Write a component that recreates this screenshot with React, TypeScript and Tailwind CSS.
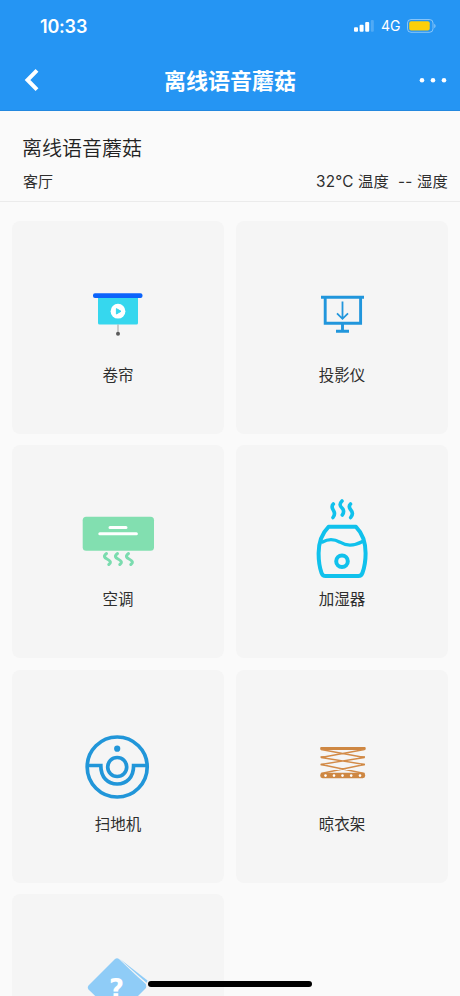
import React from 'react';

const RollerIcon = () => (
  <svg viewBox="0 0 96 96" className="w-24 h-24" fill="none">
    <rect x="28" y="30" width="40" height="28.5" rx="1.5" fill="#36d7ee" />
    <rect x="23" y="27.3" width="49.5" height="4.6" rx="2" fill="#0b63fb" />
    <circle cx="48" cy="45.2" r="7.4" fill="#fff" />
    <path d="M46.4 42.6v5.4l4.6-2.7z" fill="#36d7ee" stroke="#36d7ee" strokeLinejoin="round" />
    <path d="M48 58.5v8" stroke="#a3a3a3" strokeWidth="1" />
    <circle cx="48" cy="67.7" r="2" fill="#5a5a5a" />
  </svg>
);

const ProjectorIcon = () => (
  <svg viewBox="0 0 96 96" className="w-24 h-24" fill="none" stroke="#2196dc" strokeWidth="2.9">
    <path d="M27 31.3h43M31.2 31v26.3h35.4V31" />
    <path d="M48.5 58v7M42 65.3h13" />
    <path d="M48.5 35.5v17.3M43 47.3l5.5 5.500 5.500-5.500" strokeWidth="1.8" />
  </svg>
);

const AirConIcon = () => (
  <svg viewBox="0 0 96 96" className="w-24 h-24" fill="none" strokeLinecap="round">
    <rect x="12.7" y="26.8" width="71.3" height="34" rx="3.5" fill="#82dfb0" />
    <path d="M40 37.500h16M29.800 43.800h36.600" stroke="#fff" strokeWidth="3" />
    <g stroke="#7bdcaf" strokeWidth="3">
      <path d="M36.500 63.500c-3.500 2.500-2 4.300.5 5.500 3.500 1.700 4.500 3.500 1.800 5.500" />
      <path d="M47.500 63.500c-3.500 2.500-2 4.300.5 5.500 3.500 1.700 4.500 3.500 1.800 5.500" />
      <path d="M58.500 63.500c-3.500 2.500-2 4.300.5 5.500 3.500 1.700 4.500 3.500 1.800 5.500" />
    </g>
  </svg>
);

const HumidifierIcon = () => (
  <svg viewBox="0 0 96 96" className="w-24 h-24" fill="none" stroke="#10c1ec" strokeWidth="4" strokeLinecap="round" strokeLinejoin="round">
    <path d="M39.300 14c-2.500 2.500-1 4.500.2 6.500s1.500 4.500-.5 7M48 11c-3 3-2 5 0 7s2 4.500.3 7M56.500 14c-2.500 2.500-1 4.500.7 6.500s1.500 4.500-.5 7" strokeWidth="3.600" />
    <path d="M34.500 36.800h27.500c6 6 9.600 16 9.600 26.500 0 8-1.300 14.500-3.100 19.500-.7 2-1.800 3.200-4 3.200H31.500c-2.200 0-3.300-1.200-4-3.200-1.800-5-2.900-11.500-2.900-19.500 0-10.500 3.900-20.500 9.900-26.500z" />
    <path d="M28.500 52c6-3.500 12-3 17.500.2 7 4.300 14.500 3.600 22.500-.7" strokeWidth="3.300" />
    <circle cx="48" cy="71.200" r="5.800" />
  </svg>
);

const SweeperIcon = () => (
  <svg viewBox="0 0 96 96" className="w-24 h-24" fill="none" stroke="#2196d9" strokeWidth="3.700">
    <circle cx="47.200" cy="52" r="30" />
    <circle cx="47.200" cy="52" r="9.500" />
    <path d="M17.500 50.500h13.300c0 12 7 18.500 16.400 18.500s16.400-6.500 16.400-18.500H77" />
    <circle cx="47.200" cy="33.700" r="3.100" fill="#2196d9" stroke="none" />
  </svg>
);

const RackIcon = () => (
  <svg viewBox="0 0 96 96" className="w-24 h-24" fill="none">
    <rect x="26.200" y="32" width="45.500" height="3" rx="1" fill="#ce8742" />
    <path d="M27 34.500l43.500 8L27 49.500l43.500 9M70.500 34.500l-43.500 8 43.500 7L27 58.500" stroke="#d38b48" strokeWidth="1.300" />
    <path d="M26.500 42h4M67 42h4M26.500 49.500h4M67 49.500h4" stroke="#ce8742" strokeWidth="1.700" />
    <rect x="26.200" y="57.800" width="45" height="5.400" rx="2.400" fill="#ce8742" />
    <g fill="#fff">
      <circle cx="31.500" cy="60.600" r="1.300" />
      <circle cx="40" cy="60.600" r="1.300" />
      <circle cx="48.500" cy="60.600" r="1.300" />
      <circle cx="57.200" cy="60.600" r="1.300" />
      <circle cx="66" cy="60.600" r="1.300" />
    </g>
  </svg>
);

const UnknownIcon = () => (
  <svg viewBox="0 0 96 96" className="w-24 h-24">
    <path d="M50 20l27.500 21.500-2 5z" fill="#8fccf7" />
    <path d="M48 19.500l30.500 27" stroke="#f5f5f5" strokeWidth="1.500" />
    <path d="M45 19.900q2-1.500 4 0L75.500 45.500q1.500 2 0 4L49 76q-2 1.500-4 0L18.500 50.500q-1.500-2 0-4z" fill="#8fccf7" />
    <text x="46.500" y="59" textAnchor="middle" fontSize="26" fontWeight="700" fill="#fff" fontFamily="DejaVu Sans, sans-serif">?</text>
  </svg>
);

const devices = [
  { name: '卷帘', icon: RollerIcon },
  { name: '投影仪', icon: ProjectorIcon },
  { name: '空调', icon: AirConIcon },
  { name: '加湿器', icon: HumidifierIcon },
  { name: '扫地机', icon: SweeperIcon },
  { name: '晾衣架', icon: RackIcon },
  { name: '', icon: UnknownIcon },
];

export default function App() {
  return (
    <div className="relative w-full h-[996px] overflow-hidden bg-[#fafafa] text-[#2e2e2e] font-['Inter','Noto_Sans_CJK_SC',sans-serif]">

      {/* STATUS BAR + NAV */}
      <header className="h-[111px] bg-[#2595f3] border-b border-[#2388df] text-white">
        <div className="h-[50px] pl-10 pr-[23px] flex items-center justify-between">
          <span className="text-[18px] leading-6 font-semibold tracking-[-0.2px] mt-[3px]">10:33</span>
          <div className="flex items-center mt-0.5">
            <svg className="w-[21px] h-3" viewBox="0 0 21 12" fill="#fff">
              <rect x="0" y="7.200" width="4" height="4.500" rx="1" />
              <rect x="5.600" y="4.800" width="4" height="6.900" rx="1" />
              <rect x="11.200" y="2" width="4" height="9.700" rx="1" />
              <rect x="16.800" y="0" width="3" height="11.700" rx="1" opacity="0.200" />
            </svg>
            <span className="text-[14px] leading-5 ml-[6px] w-[26px]">4G</span>
            <svg className="w-[30px] h-[14px]" viewBox="0 0 30 14">
              <rect x="0.500" y="0.500" width="25.500" height="12.800" rx="3.500" fill="none" stroke="#fff" strokeOpacity="0.450" />
              <rect x="2.200" y="2.200" width="20.500" height="9.400" rx="2" fill="#fccf0a" />
              <path d="M27.300 4.800v4.400c1.700-.7 1.700-3.700 0-4.400z" fill="#fff" opacity="0.500" />
            </svg>
          </div>
        </div>
        <div className="h-[60px] px-[13px] grid grid-cols-[1fr_auto_1fr] items-center">
          <svg className="w-[28px] h-6 ml-[11px]" viewBox="0 0 28 24" fill="none" stroke="#fff" strokeWidth="4">
            <path d="M13 2.300L3.500 12l9.500 9.700" />
          </svg>
          <h1 className="text-[22px] leading-8 font-bold pt-px">离线语音蘑菇</h1>
          <svg className="w-[28px] h-6 justify-self-end" viewBox="0 0 28 24" fill="#fff">
            <circle cx="3" cy="12.200" r="2.300" />
            <circle cx="14" cy="12.200" r="2.300" />
            <circle cx="25" cy="12.200" r="2.300" />
          </svg>
        </div>
      </header>

      {/* ROOM INFO */}
      <section className="h-[91px] pt-[22px] pl-[23px] pr-3 border-b border-[#ebebeb]">
        <h2 className="text-[20px] leading-[30px] font-[350] -ml-px pt-px text-[#222]">离线语音蘑菇</h2>
        <div className="mt-[6px] flex justify-between text-[15px] leading-6">
          <span>客厅</span>
          <span className="flex gap-[9px] text-[15.300px] tracking-[0.200px]"><span>32°C 温度</span><span>-- 湿度</span></span>
        </div>
      </section>

      {/* DEVICES */}
      <main className="grid grid-cols-2 gap-x-3 gap-y-[11.300px] px-3 pt-[19px]">
        {devices.map((device, i) => (
          <div key={i} className="h-[213px] rounded-lg bg-[#f5f5f5] pt-[45px] flex flex-col items-center">
            <device.icon />
            <p className="text-[15.500px] leading-6 mt-0.5">{device.name}</p>
          </div>
        ))}
      </main>

      {/* HOME INDICATOR */}
      <div className="absolute left-[148px] top-[981px] w-[164px] h-[6px] rounded-full bg-black"></div>
    </div>
  );
}
